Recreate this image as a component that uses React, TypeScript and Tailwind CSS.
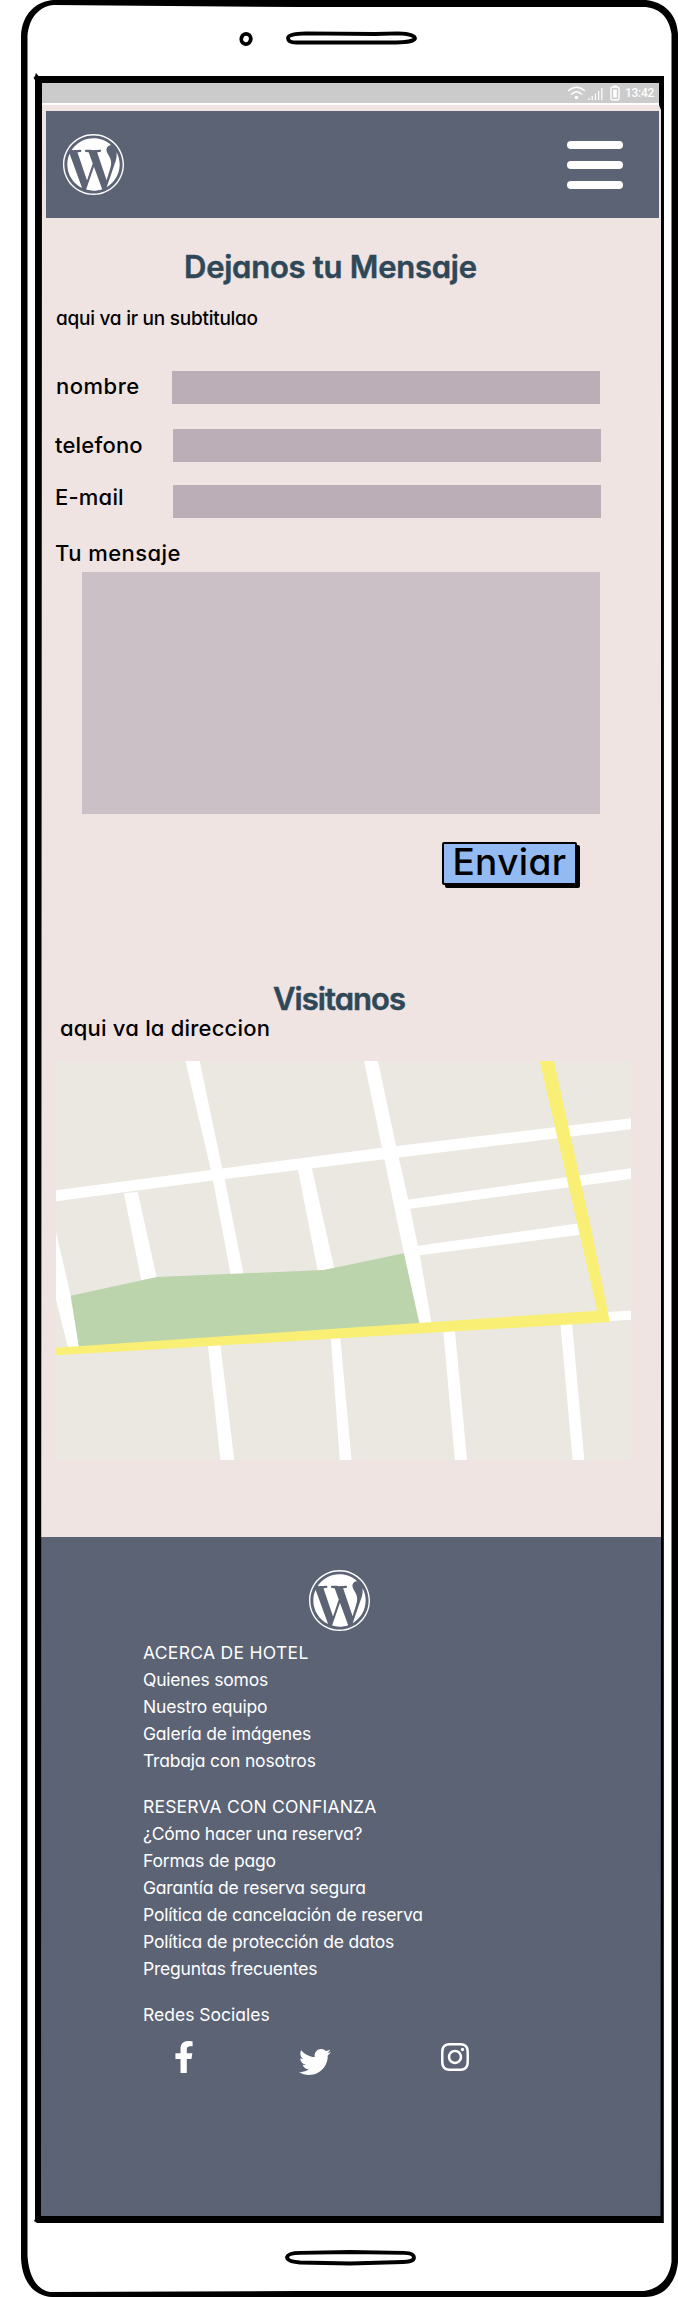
import React from 'react';
import { FaWordpress, FaFacebookF, FaTwitter, FaInstagram } from 'react-icons/fa';

const aboutLinks = ['Quienes somos', 'Nuestro equipo', 'Galería de imágenes', 'Trabaja con nosotros'];
const bookingLinks = [
  '¿Cómo hacer una reserva?',
  'Formas de pago',
  'Garantía de reserva segura',
  'Política de cancelación de reserva',
  'Política de protección de datos',
  'Preguntas frecuentes',
];

/* Hand-drawn outline of the phone, laid over the screen */
function PhoneOutline() {
  return (
    <svg className="pointer-events-none absolute inset-0" width="678" height="2297" viewBox="0 0 678 2297" fill="none">
      <path
        fill="#000"
        fillRule="evenodd"
        d="M21 36C22 14 36 1 54 0H646C664 2 677 14 678 34V2262C676 2283 664 2297 645 2297H52C34 2296 22 2282 21 2258ZM27.500 36V2256C29 2278 38 2290 50 2292L300 2291H644C658 2289 669 2280 671.500 2262V34C669 16 658 7 643 7H300L54 5C40 6 29 17 27.500 36Z"
      />
      <path
        fill="#000"
        fillRule="evenodd"
        d="M35 76L36 73L38.500 76H664V79L663.800 2223H37L34 2221L35 2219V80L33.500 78ZM42 83V105L41.200 1537L41 2216H660.500L661 1500V110L659 105V83Z"
      />
      <ellipse cx="246" cy="39" rx="4.700" ry="5" stroke="#000" strokeWidth="3.800" transform="rotate(20 246 39)" />
      <path d="M288 38C288 35 295 33.500 306 33.300L375 34L398 33.300C409 33.500 415 36 415 38.500C414 41 405 42.500 396 42.500H296C290 42.500 288 41 288 38Z" stroke="#000" strokeWidth="3.800" />
      <path d="M287 2257C288 2253.500 293 2252.800 300 2252.800L350 2252L404 2252.800C410 2253 414 2254.500 414 2257.500C414 2260.500 409 2262 403 2262L350 2263.500L300 2262.500C292 2262 287 2260.500 287 2257Z" stroke="#000" strokeWidth="3.800" />
    </svg>
  );
}

function StatusBar() {
  return (
    <div className="flex h-5 w-[618px] items-center justify-end bg-[#cbcbcb] pr-[5px] text-white">
      <svg width="19" height="14" viewBox="0 0 19 14" fill="none" stroke="#fff" strokeWidth="1.500">
        <path d="M1 5Q9.500 -2.500 18 5M4 8.500Q9.500 3 15 8.500" />
        <circle cx="9.500" cy="11.500" r="1.800" fill="#fff" stroke="none" />
      </svg>
      <svg className="ml-[2px]" width="15" height="13" viewBox="0 0 15 13" stroke="#fff" strokeWidth="1.200">
        <path d="M1 13V11M4.200 13V9M7.400 13V6.500M10.600 13V4M13.800 13V1" />
      </svg>
      <svg className="ml-[7px]" width="10" height="16" viewBox="0 0 10 16" fill="none">
        <path d="M3 1.200h4M1 4q0-2 2-2h4q2 0 2 2v9q0 2-2 2H3q-2 0-2-2z" stroke="#fff" strokeWidth="1.400" />
        <path d="M3.200 4.500h3.600v8H3.200z" fill="#fff" />
      </svg>
      <span className="ml-[5px] font-['Roboto',sans-serif] text-[12px] leading-5 font-medium tracking-[-0.3px]">13:42</span>
    </div>
  );
}

function CityMap() {
  return (
    <svg className="mt-5 ml-[15px] block" width="575" height="399" viewBox="130 303 1329 1197" preserveAspectRatio="none">
      <path fill="#ebe8e1" d="M130 303H1459V1500H130Z" />
      <g fill="#fff">
        <path d="M429 303H462L514 625L520 657L564 945H534L494 670L488 630Z" />
        <path d="M842 303H874L916 558L944 718L971 885L998 1090H970L934 880L889 598Z" />
        <path d="M130 691L488 630L883 563L1459 475V508L889 598L520 657L130 724Z" />
        <path d="M287 700L319 696L363 955L327 960Z" />
        <path d="M689 628L721 622L773 925L735 932Z" />
        <path d="M942 719L1459 625V657L944 747Z" />
        <path d="M963 858L1340 790L1368 815L1369 820L969 886Z" />
        <path d="M130 815L164 1007L183 1160L158 1164L130 1018Z" />
        <path d="M1400 1056L1459 1052V1079L1405 1084Z" />
        <path d="M481 1155H510L542 1500H510Z" />
        <path d="M765 1132H787L813 1500H786Z" />
        <path d="M1025 1112H1052L1080 1500H1052Z" />
        <path d="M1296 1092H1323L1351 1500H1324Z" />
      </g>
      <path fill="#bbd4ab" d="M164 1007L363 951L749 930L934 880L970 1092L183 1160Z" />
      <path fill="#f9ef75" d="M1248 303H1281L1316 510L1366 800L1410 1086L130 1186V1163L1381 1052Z" />
    </svg>
  );
}

export default function App() {
  return (
    <div className="relative h-[2297px] w-[678px] overflow-hidden bg-white pt-[83px] pl-[41px] font-['Inter',sans-serif] font-medium text-black [font-feature-settings:'cv11']">
      <StatusBar />
      <div className="mt-[2px] h-[2111px] w-[620px] bg-[#f0e4e3] pt-[6px]">
        <header className="ml-[5px] flex h-[107px] w-[613px] items-center justify-between bg-[#5b6375] pr-9 pl-[16px]">
          <FaWordpress className="size-[63px] text-white" />
          <div className="flex w-14 flex-col gap-3">
            <span className="h-2 rounded-full bg-white" />
            <span className="h-2 rounded-full bg-white" />
            <span className="h-2 rounded-full bg-white" />
          </div>
        </header>

        <main className="h-[1319px] pt-[33px]">
          <h1 className="ml-[143px] text-[31px] leading-8 font-semibold tracking-[-0.25px] text-[#2f4858] [-webkit-text-stroke:0.5px_#2f4858]">Dejanos tu Mensaje</h1>
          <p className="mt-[24px] ml-[15px] text-[19px] leading-6 tracking-[-0.25px]">aqui va ir un subtitulao</p>

          <form className="mt-[40px] text-[22px] leading-6">
            <label className="ml-[15px] flex h-[33px] items-start">
              <span className="w-[116px] pt-[3px] tracking-[0.5px]">nombre</span>
              <span className="h-[33px] w-[428px] bg-[#bbaeb7]" />
            </label>
            <label className="mt-[25px] ml-[14px] flex h-[33px] items-start">
              <span className="w-[118px] pt-[4px] tracking-[0.2px]">telefono</span>
              <span className="h-[33px] w-[428px] bg-[#bbaeb7]" />
            </label>
            <label className="mt-[23px] ml-[14px] flex h-[33px] items-start">
              <span className="w-[118px] tracking-[0.2px]">E-mail</span>
              <span className="h-[33px] w-[428px] bg-[#bbaeb7]" />
            </label>
            <label className="mt-[23px] ml-[14px] block tracking-[0.45px]">Tu mensaje</label>
            <div className="mt-[7px] ml-[41px] h-[242px] w-[518px] bg-[#ccc0c7]" />
            <button
              type="button"
              className="mt-7 ml-[401px] flex h-[43px] w-[135px] items-center justify-center rounded-[2px] border-[2.500px] border-black bg-[#94baf2] pb-1 text-[37px] leading-9 tracking-[0.4px] shadow-[3px_3px_0_#000]"
            >
              Enviar
            </button>
          </form>

          <h2 className="mt-[98px] ml-[232px] text-[31px] leading-8 font-semibold tracking-[-0.95px] text-[#2f4858] [-webkit-text-stroke:0.5px_#2f4858]">Visitanos</h2>
          <p className="mt-[1px] ml-[19px] text-[22px] leading-6 tracking-[0.2px]">aqui va la direccion</p>
          <div className="h-px" />
          <CityMap />
        </main>

        <footer className="h-[679px] w-[620px] bg-[#5b6375] pt-[32px] text-[17.5px] leading-[27px] font-normal text-white">
          <FaWordpress className="ml-[267px] size-[63px]" />
          <div className="mt-[7px] ml-[102px] tracking-[-0.2px]">
            <h3 className="tracking-[0.3px]">ACERCA DE HOTEL</h3>
            {aboutLinks.map((t) => (
              <p key={t}>{t}</p>
            ))}
            <h3 className="mt-[19px] tracking-[0.2px]">RESERVA CON CONFIANZA</h3>
            {bookingLinks.map((t) => (
              <p key={t}>{t}</p>
            ))}
            <h3 className="mt-[19px] tracking-[0px]">Redes Sociales</h3>
          </div>
          <div className="mt-[13px] ml-[133px] flex items-start">
            <FaFacebookF className="h-8 w-5" />
            <FaTwitter className="mt-[5px] ml-[105px] size-8" />
            <FaInstagram className="ml-[108px] size-8" />
          </div>
        </footer>
      </div>
      <PhoneOutline />
    </div>
  );
}
